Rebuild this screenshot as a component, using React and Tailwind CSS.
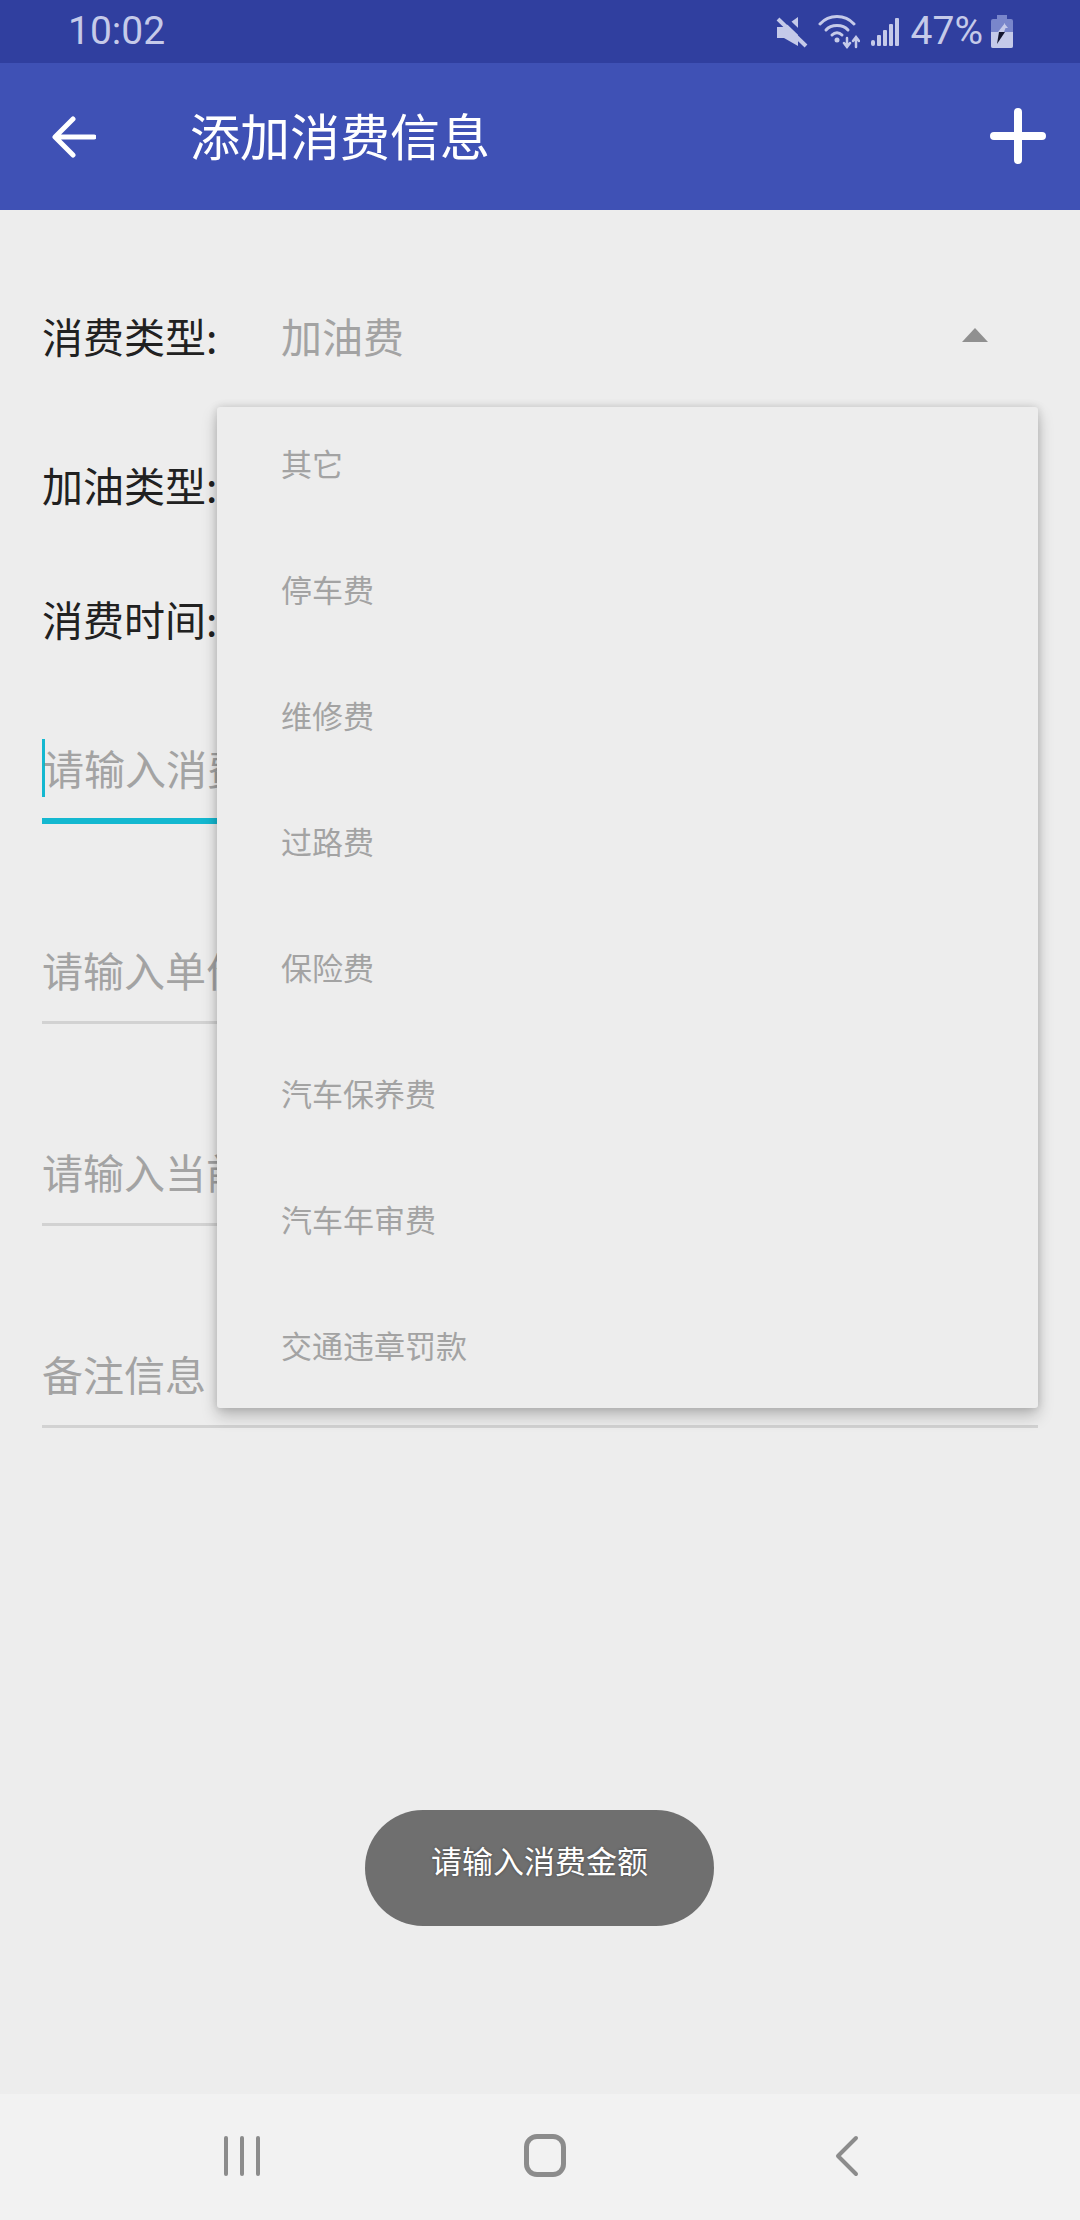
const font = { fontFamily: '"Noto Sans CJK SC", "Noto Sans", sans-serif' };

const spinnerItems = ['其它', '停车费', '维修费', '过路费', '保险费', '汽车保养费', '汽车年审费', '交通违章罚款'];

function StatusIcons() {
  return (
    <div className="flex items-center">
      <svg width="32" height="32" viewBox="0 0 32 32">
        <path d="M1 11 L8 11 L22 1 L22 30 L8 22 L1 22 Z" fill="#c5cae9" />
        <path d="M5 -1 L33 26" stroke="#303f9f" strokeWidth="5" />
        <path d="M2 3 L30 30" stroke="#c5cae9" strokeWidth="4" />
      </svg>
      <svg width="42" height="34" viewBox="0 0 42 34" className="ml-[10px]" fill="none" stroke="#c5cae9" strokeWidth="3" strokeLinecap="round">
        <path d="M2 9 C11 -1 27 -1 36 9" />
        <path d="M8 15 C13 9 25 9 30 15" />
        <path d="M14 20 C17 17 21 17 24 20" />
        <circle cx="19" cy="25" r="2.5" fill="#c5cae9" stroke="none" />
        <path d="M29 23 V32 M26 28 L29 32 L32 28" strokeWidth="2.5" />
        <path d="M38 32 V23 M35 26 L38 22 L41 26" strokeWidth="2.5" />
      </svg>
      <svg width="30" height="30" viewBox="0 0 30 30" className="ml-[10px]" fill="#c5cae9">
        <rect x="1" y="23" width="4" height="6" rx="2" />
        <rect x="7" y="18" width="4" height="11" rx="1" />
        <rect x="13" y="13" width="4" height="16" rx="1" />
        <rect x="19" y="7" width="4" height="22" rx="1" />
        <rect x="25" y="1" width="4" height="28" rx="1" />
      </svg>
      <span className="ml-[11px] text-[39px] leading-none text-[#c5cae9]" style={{ fontFamily: 'Roboto, sans-serif' }}>47%</span>
      <svg width="22" height="33" viewBox="0 0 22 33" className="ml-[8px]">
        <path d="M6 0 H16 V4 H20 Q22 4 22 6 V31 Q22 33 20 33 H2 Q0 33 0 31 V6 Q0 4 2 4 H6 Z" fill="#7986cb" />
        <path d="M0 17 H22 V31 Q22 33 20 33 H2 Q0 33 0 31 Z" fill="#c5cae9" />
        <path d="M14 8 L7 17 H13 L14.5 13 H17 L13 8 Z" fill="#c5cae9" />
        <path d="M8 17 H14 L6 29 Z" fill="#14162e" />
      </svg>
    </div>
  );
}

function LabelRow({ label, value, className, children }) {
  return (
    <div className={`relative flex h-[120px] items-center pb-[4px] pl-[42px] text-[41px] leading-none ${className}`}>
      <span className="w-[239px] shrink-0 text-[#212121]">{label}</span>
      {value && <span className="text-[#a3a3a3]">{value}</span>}
      {children}
    </div>
  );
}

function Field({ text, focused, className }) {
  return (
    <div className={`mx-[42px] box-content flex h-[100px] items-center text-[41px] leading-none text-[#a3a3a3] ${focused ? 'border-b-[6px] border-[#14b8d0]' : 'border-b-[3px] border-[#d2d2d2]'} ${className}`}>
      {focused && <span className="mr-[-2px] h-[58px] w-[3px] shrink-0 bg-[#14b8d0]" />}
      <span className={focused ? 'mb-[2px]' : 'mb-[3px]'}>{text}</span>
    </div>
  );
}

export default function App() {
  return (
    <div className="relative flex h-[2220px] w-[1080px] flex-col overflow-hidden bg-[#ededed]" style={font}>
      <div className="flex h-[63px] shrink-0 items-center justify-between bg-[#303f9f] pl-[68px] pr-[67px]">
        <span className="text-[39px] leading-none text-[#c5cae9]" style={{ fontFamily: 'Roboto, sans-serif' }}>10:02</span>
        <StatusIcons />
      </div>

      <div className="flex h-[147px] shrink-0 items-center bg-[#3f51b5] pl-[52px] pr-[34px]">
        <svg width="44" height="42" viewBox="0 0 44 42" fill="none" stroke="#fff" strokeWidth="5" strokeLinecap="round" strokeLinejoin="round">
          <path d="M42 21 H4 M21 3 L3 21 L21 39" />
        </svg>
        <span className="mb-[5px] ml-[94px] text-[50px] leading-none text-white">添加消费信息</span>
        <svg width="56" height="56" viewBox="0 0 56 56" className="mb-[2px] ml-auto" fill="none" stroke="#fff" strokeWidth="8" strokeLinecap="round">
          <path d="M28 4 V52 M4 28 H52" />
        </svg>
      </div>

      <main className="min-h-0 flex-1 pt-[67px]">
        <LabelRow label="消费类型:" value="加油费">
          <svg width="26" height="14" viewBox="0 0 26 14" className="absolute left-[962px] top-[51px]">
            <path d="M13 0 L26 14 H0 Z" fill="#909090" />
          </svg>
        </LabelRow>
        <LabelRow label="加油类型:" className="mt-[29px]" />
        <LabelRow label="消费时间:" className="mt-[14px]" />
        <Field text="请输入消费金额" focused className="mt-[38px]" />
        <Field text="请输入单价" className="mt-[97px]" />
        <Field text="请输入当前里程" className="mt-[99px]" />
        <Field text="备注信息" className="mt-[99px]" />
      </main>

      <nav className="flex h-[126px] shrink-0 items-center bg-[#f2f2f2] pb-[3px] pl-[224px]">
        <div className="flex h-[40px] gap-[12px]">
          <span className="w-[4px] rounded-full bg-[#8c8c8c]" />
          <span className="w-[4px] rounded-full bg-[#8c8c8c]" />
          <span className="w-[4px] rounded-full bg-[#8c8c8c]" />
        </div>
        <span className="ml-[264px] h-[43px] w-[42px] rounded-[13px] border-[5px] border-[#8c8c8c]" />
        <svg width="24" height="42" viewBox="0 0 24 42" className="ml-[269px]" fill="none" stroke="#8c8c8c" strokeWidth="4" strokeLinecap="round" strokeLinejoin="round">
          <path d="M21 3 L3 21 L21 39" />
        </svg>
      </nav>

      {/* spinner dropdown */}
      <div className="absolute left-[217px] top-[407px] h-[1001px] w-[821px] overflow-hidden rounded-[3px] bg-[#ededed] shadow-[0_8px_16px_rgba(0,0,0,0.22),0_0_8px_rgba(0,0,0,0.14)]">
        <ul className="-mt-[6px]">
          {spinnerItems.map(item => (
            <li key={item} className="flex h-[126px] items-center pb-[4px] pl-[64px] text-[31px] leading-none text-[#a3a3a3]">{item}</li>
          ))}
        </ul>
      </div>

      {/* toast */}
      <div className="absolute left-[365px] top-[1810px] flex h-[116px] w-[349px] justify-center rounded-full bg-[#6f6f6f] pt-[34px] text-[31px] leading-[31px] text-white [text-shadow:0_0_3px_rgba(0,0,0,0.4)]">
        请输入消费金额
      </div>
    </div>
  );
}
